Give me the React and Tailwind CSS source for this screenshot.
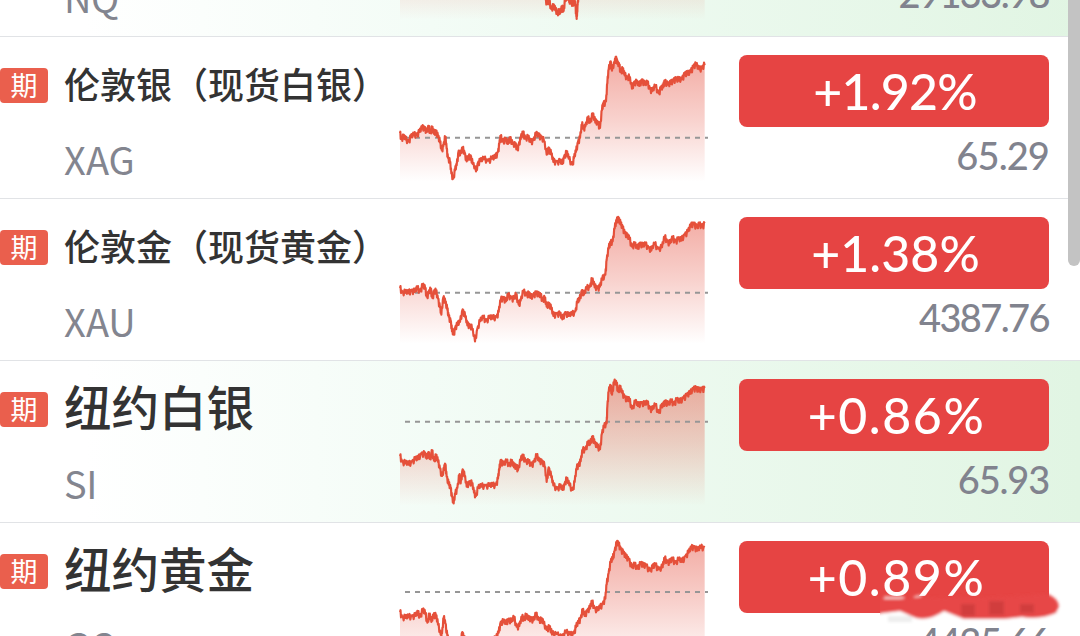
const XAG = [[30,400],[34,416],[40,411],[46,418],[56,424],[62,412],[72,406],[80,404],[88,396],[96,386],[104,382],[110,396],[116,384],[121,399],[126,382],[132,402],[138,394],[144,408],[150,428],[155,450],[160,438],[166,412],[170,446],[174,474],[180,488],[184,520],[190,536],[195,512],[200,496],[206,452],[210,466],[218,446],[224,458],[230,484],[236,474],[242,466],[248,492],[258,514],[264,488],[270,484],[282,478],[294,482],[306,476],[316,474],[324,456],[328,432],[332,412],[338,424],[346,418],[354,432],[360,412],[368,432],[376,438],[382,446],[386,436],[392,418],[399,396],[406,416],[414,414],[422,426],[430,420],[438,404],[446,408],[454,410],[462,424],[470,464],[476,442],[484,464],[490,486],[500,484],[510,486],[517,492],[522,470],[530,458],[536,476],[547,494],[552,474],[558,456],[564,426],[570,414],[576,374],[580,384],[586,380],[594,356],[600,368],[608,340],[616,368],[624,368],[630,384],[636,330],[640,312],[648,304],[652,250],[656,208],[662,184],[666,212],[674,188],[678,170],[682,192],[688,198],[692,214],[698,210],[704,226],[712,232],[718,232],[726,266],[732,246],[740,248],[748,258],[756,238],[764,254],[772,250],[780,266],[786,274],[796,260],[806,280],[812,266],[820,262],[824,242],[834,254],[842,252],[850,242],[858,236],[866,242],[876,238],[884,220],[892,224],[902,216],[910,198],[918,196],[928,208],[936,202],[944,196]];
const XAU = [[30,264],[36,276],[46,278],[56,280],[64,270],[74,276],[82,266],[90,274],[98,256],[106,268],[110,290],[116,280],[122,270],[127,294],[132,276],[138,276],[144,296],[150,322],[154,344],[160,292],[166,304],[172,330],[176,350],[182,362],[186,394],[191,404],[195,384],[202,376],[210,366],[218,328],[226,352],[232,376],[240,374],[246,386],[255,424],[262,386],[270,364],[280,354],[288,362],[298,354],[308,356],[320,350],[326,336],[332,302],[340,292],[348,304],[354,288],[364,294],[372,296],[378,286],[386,314],[392,302],[400,276],[410,286],[416,278],[422,294],[430,288],[438,276],[446,288],[452,286],[458,300],[464,296],[470,320],[476,308],[484,328],[490,348],[500,340],[510,344],[517,358],[526,336],[536,348],[546,344],[556,334],[562,306],[568,302],[576,270],[582,284],[590,266],[600,260],[606,236],[614,262],[622,264],[630,260],[636,240],[646,224],[650,180],[656,146],[662,126],[668,124],[674,86],[680,60],[686,54],[692,74],[698,84],[704,96],[712,112],[718,114],[726,140],[734,134],[742,146],[750,128],[758,140],[766,134],[776,142],[784,152],[794,132],[804,146],[816,142],[824,112],[832,124],[840,130],[848,116],[856,124],[864,118],[874,122],[884,104],[894,94],[902,80],[912,70],[920,82],[928,76],[936,80],[944,70]];
const SI = [[30,288],[36,304],[46,310],[56,314],[66,304],[76,298],[84,298],[94,280],[104,282],[110,296],[116,276],[122,298],[126,274],[132,302],[138,286],[144,306],[150,326],[156,348],[162,330],[166,312],[170,350],[176,374],[182,384],[186,410],[191,430],[196,400],[202,384],[208,346],[212,370],[218,328],[224,350],[230,380],[238,364],[246,372],[252,398],[258,408],[264,384],[274,380],[286,376],[298,378],[308,378],[318,374],[324,356],[328,330],[332,300],[340,314],[350,306],[358,316],[364,302],[372,322],[380,318],[384,330],[392,302],[399,286],[406,304],[416,308],[424,316],[432,306],[440,288],[448,304],[456,302],[464,320],[470,366],[476,322],[484,352],[490,376],[502,386],[510,380],[518,390],[524,370],[530,358],[538,376],[548,390],[554,366],[560,326],[566,312],[572,304],[578,272],[586,268],[594,248],[600,254],[608,228],[614,250],[622,262],[630,268],[636,220],[642,202],[650,190],[652,140],[656,96],[662,76],[666,104],[672,68],[680,70],[684,94],[690,84],[696,98],[704,110],[712,122],[718,118],[726,146],[736,126],[744,138],[754,126],[764,134],[772,130],[780,144],[786,150],[796,136],[806,158],[814,140],[820,138],[826,122],[834,134],[844,126],[852,132],[860,118],[870,128],[880,114],[890,106],[900,102],[910,86],[918,84],[926,94],[936,88],[944,84]];
const GC = [[30,276],[36,290],[46,294],[56,292],[66,288],[76,288],[84,280],[90,290],[98,270],[106,282],[112,308],[118,282],[124,306],[130,284],[138,286],[144,314],[152,344],[156,340],[161,294],[166,310],[172,346],[178,366],[184,382],[191,416],[200,390],[210,370],[217,336],[226,366],[240,386],[255,430],[266,384],[280,366],[300,366],[318,356],[326,338],[332,306],[340,306],[348,312],[356,296],[364,306],[372,294],[380,320],[388,318],[396,294],[402,296],[408,286],[416,300],[424,294],[430,302],[438,284],[446,300],[454,298],[460,310],[470,330],[478,318],[486,344],[500,342],[516,350],[528,338],[540,344],[552,340],[558,322],[566,306],[572,294],[578,272],[584,288],[592,270],[600,266],[606,246],[614,264],[622,272],[630,264],[638,250],[646,236],[650,194],[656,158],[662,126],[668,118],[674,92],[680,68],[686,76],[692,86],[700,98],[708,114],[716,116],[726,142],[734,136],[742,146],[752,128],[760,140],[768,136],[780,152],[788,144],[796,134],[806,148],[818,142],[824,114],[832,126],[840,128],[848,118],[856,128],[866,120],[876,126],[886,108],[896,98],[904,86],[912,78],[922,92],[932,84],[944,82]];
const NQ = [[30,200],[100,170],[180,260],[260,300],[340,320],[400,340],[440,350],[466,358],[472,372],[478,368],[484,388],[490,378],[496,392],[502,400],[506,394],[510,402],[516,380],[521,394],[525,366],[530,350],[536,350],[539,372],[544,362],[548,376],[553,366],[556,374],[559,410],[561,410],[563,376],[566,340],[600,200],[680,80],[800,120],[944,90]];

// Adds small tick-by-tick movement between the traced points.
function roughen(points) {
  const out = [];
  points.forEach(([x, y], i) => {
    out.push([x, y]);
    const next = points[i + 1];
    if (!next || next[0] - x > 20) return;
    for (let k = 1; k < 4; k++) {
      const t = k / 4;
      const sign = k % 2 ? -1 : 1;
      const amount = 2 + 8 * Math.abs(Math.sin(i * 7.3 + k * 2.1));
      out.push([x + (next[0] - x) * t, y + (next[1] - y) * t + sign * amount]);
    }
  });
  return out.map(([x, y]) => x.toFixed(1) + ',' + y.toFixed(1)).join(' ');
}

function Sparkline({ id, points, shift, base, top }) {
  const line = roughen(points);
  const floor = 434 - shift;
  return (
    <svg className="h-[161px] w-[330px] shrink-0" viewBox="0 0 990 483">
      <defs>
        <linearGradient id={id} gradientUnits="userSpaceOnUse" x1="0" x2="0" y1={top} y2={floor}>
          <stop offset="0" stopColor="#e5503f" stopOpacity="0.48" />
          <stop offset="0.5" stopColor="#e5503f" stopOpacity="0.26" />
          <stop offset="1" stopColor="#e5503f" stopOpacity="0" />
        </linearGradient>
      </defs>
      <g transform={`translate(0 ${shift})`}>
        <polygon points={`30,${floor} ${line} 944,${floor}`} fill={`url(#${id})`} />
        <path d={`M45 ${base}H954`} stroke="#969696" strokeWidth="6" strokeDasharray="15 15" />
        <polyline points={line} fill="none" stroke="#e5503a" strokeWidth="6.5" strokeLinejoin="round" />
      </g>
    </svg>
  );
}

const rows = [
  { name: '纳指', code: 'NQ', change: '+0.50%', price: '29133.98', tinted: true, changeClass: 'tracking-[1.6px] pl-[5px]', priceClass: 'tracking-[-1.6px]', chart: { points: NQ, shift: 14, base: 200, top: 50 } },
  { name: '伦敦银（现货白银）', small: true, code: 'XAG', change: '+1.92%', price: '65.29', changeClass: 'tracking-[-0.8px] pl-[2px]', priceClass: 'tracking-[-0.9px]', chart: { points: XAG, shift: -111, base: 413, top: 170 } },
  { name: '伦敦金（现货黄金）', small: true, code: 'XAU', change: '+1.38%', price: '4387.76', changeClass: 'tracking-[0.1px] pl-[3px]', priceClass: 'tracking-[-1.6px]', chart: { points: XAU, shift: 3, base: 278, top: 50 } },
  { name: '纽约白银', code: 'SI', change: '+0.86%', price: '65.93', tinted: true, changeClass: 'tracking-[1.6px] pl-[5px]', priceClass: 'tracking-[-1.2px]', chart: { points: SI, shift: -3, base: 185, top: 60 } },
  { name: '纽约黄金', code: 'GC', change: '+0.89%', price: '4435.66', changeClass: 'tracking-[1.6px] pl-[5px]', priceClass: 'tracking-[-1.5px]', chart: { points: GC, shift: -9, base: 216, top: 60 } },
];

function Row({ row }) {
  return (
    <div className={`flex h-[162px] shrink-0 border-b border-[#e1e3e6] ${row.tinted ? 'bg-linear-to-r from-white from-8% via-[#f3fcf6] via-40% to-[#e1f5e3]' : 'bg-white'}`}>
      <div className="flex w-[390px] shrink-0">
        <div className="mt-[31px] flex h-[35px] w-12 items-center justify-center rounded-[4px] bg-[#ea5f4d] pb-[2px] text-[27px] leading-none text-white">期</div>
        <div className="ml-4 flex flex-col whitespace-nowrap">
          <div className={`flex h-[64px] items-center font-medium text-[#333333] ${row.small ? 'mt-[14px] text-[36px]' : 'mt-[13px] text-[47.5px]'}`}>{row.name}</div>
          <div className={`text-[38px] leading-[54px] text-[#83858f] ${row.small ? 'mt-[17px]' : 'mt-[18px] tracking-[-0.5px]'}`}>{row.code}</div>
        </div>
      </div>
      <Sparkline id={`fill-${row.code}`} {...row.chart} />
      <div className="ml-[19px] flex w-[310px] shrink-0 flex-col font-['Lato'] font-medium">
        <div className={`mt-[18px] flex h-[72px] items-center justify-center rounded-[8px] bg-[#e64443] text-[50px] leading-none text-white ${row.changeClass}`}>{row.change}</div>
        <div className={`mt-[6px] text-right text-[38px] leading-[44px] text-[#81838e] ${row.priceClass}`}>{row.price}</div>
      </div>
    </div>
  );
}

function Smudge() {
  return (
    <svg className="absolute left-[880px] top-[588px] h-[38px] w-[196px]" viewBox="0 0 196 38">
      <defs>
        <filter id="soft" x="-10%" y="-30%" width="120%" height="160%"><feGaussianBlur stdDeviation="1.8" /></filter>
      </defs>
      <g filter="url(#soft)">
        <path d="M0 22H186V31Q160 35 130 34H0Z" fill="#fff" />
        <path d="M8 28h24v6h-24z" fill="#ededed" />
        <path d="M4 8h20v4h-20zM34 8l8-2-3 6h-5z" fill="#fff" opacity=".6" />
        <path d="M-4 11L20 11L40 9L62 10L84 8L100 10L120 9L168 6Q184 14 176 25Q160 32 142 29L124 31L104 31L84 31L64 23Q50 33 36 30L20 23L-4 26Z" fill="#e74646" />
        <path d="M81 16h14v12H81zM109 13h15v14h-15zM140 16h14v9h-14z" fill="#c73b3b" opacity=".7" />
      </g>
    </svg>
  );
}

export default function App() {
  return (
    <div className="relative h-[636px] w-[1080px] overflow-hidden bg-white font-['Noto_Sans_CJK_SC',sans-serif]">
      <div className="-mt-[125px] flex flex-col">
        {rows.map((row) => <Row key={row.code} row={row} />)}
      </div>
      <Smudge />
      <div className="absolute right-0 top-0 h-[266px] w-3 rounded-b-full bg-[#c3c3c3]" />
    </div>
  );
}
